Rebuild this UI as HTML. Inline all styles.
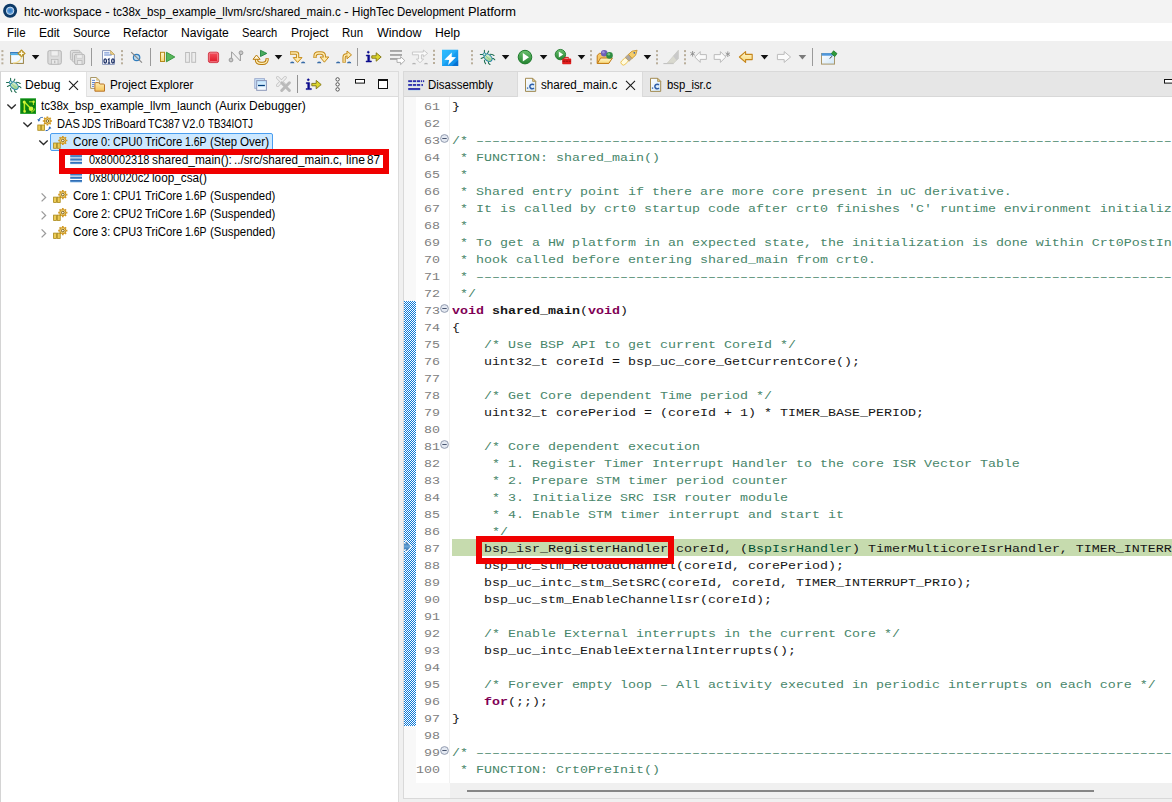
<!DOCTYPE html>
<html><head><meta charset="utf-8"><title>htc-workspace</title>
<style>
*{box-sizing:border-box;margin:0;padding:0}
html,body{width:1172px;height:802px;overflow:hidden;background:#f0f0f0;font-family:"Liberation Sans", sans-serif;}
.a{position:absolute}
.t{position:absolute;white-space:pre;line-height:14px;font-family:"Liberation Sans", sans-serif;transform-origin:0 0;display:inline-block}
#title{left:0;top:0;width:1172px;height:23px;background:#f3f3f3}
#menu{left:0;top:23px;width:1172px;height:18px;background:#fff}
#tool{left:0;top:41px;width:1172px;height:30px;background:#f0f0f0}
#lpanel{left:0;top:71px;width:399px;height:740px;background:#fff;border:1px solid #dcdcdc;border-left-color:#d4d4d4}
#ltabs{left:1px;top:72px;width:397px;height:25px;background:#f1f1f1;border-bottom:1px solid #dcdcdc}
#ltab1{left:1px;top:72px;width:86px;height:25px;background:#fff;border-right:1px solid #e2e2e2}
#rpanel{left:403px;top:71px;width:780px;height:728px;background:#fff;border:1px solid #d9d9d9}
#rtabs{left:404px;top:72px;width:768px;height:25px;background:#e6e6e6;border-bottom:1px solid #d8d8d8}
#rtab2{left:517px;top:72px;width:126px;height:25px;background:#f6f6f6;border-right:1px solid #dadada;border-left:1px solid #dadada}
#ruler{left:404px;top:97px;width:12px;height:701px;background:#f8f8f8}
#rulerb{left:404px;top:301px;width:12px;height:425px;background-color:#fff;
  background-image:linear-gradient(45deg,#0a78d8 25%,transparent 25%,transparent 75%,#0a78d8 75%),linear-gradient(45deg,#0a78d8 25%,transparent 25%,transparent 75%,#0a78d8 75%);
  background-size:2px 2px;background-position:1px 0,0 1px}
#lnbot{left:416px;top:783px;width:34px;height:15px;background:#f8f8f8}
#lnsep{left:449px;top:97px;width:1px;height:686px;background:#f1f1f1}
#hs{left:450px;top:783px;width:722px;height:15px;background:#f0f0f0}
#hst{left:467px;top:790px;width:627px;height:2px;background:#868686}
#nums{left:409px;top:98.5px;width:31px;height:806px;overflow:hidden;text-align:right;color:#808080;font:13.333px/20px "Liberation Mono", monospace;transform:scaleY(.85);transform-origin:0 0}
#code{left:452px;top:98.5px;width:720px;height:806px;overflow:hidden;white-space:pre;color:#161616;font:13.333px/20px "Liberation Mono", monospace;transform:scaleY(.85);transform-origin:0 0}
#cur{left:452px;top:539px;width:720px;height:17px;background:#c6dbae}
.c{color:#48866a} .k{color:#7f0055;font-weight:bold} .b{font-weight:bold} .ty{color:#005032}
.fold{position:absolute;left:439.8px}
#sel{left:50px;top:133px;width:223px;height:18px;background:#cce8ff;border:1px solid #4a9ef0;border-radius:2px}
.red{position:absolute;border:6px solid #f00000}
</style></head><body>
<div id=title class=a></div><div id=menu class=a></div><div id=tool class=a></div>
<div id=lpanel class=a></div><div id=ltabs class=a></div><div id=ltab1 class=a></div>
<div id=rpanel class=a></div><div id=rtabs class=a></div><div id=rtab2 class=a></div>
<div id=ruler class=a></div><div id=rulerb class=a></div><div id=lnbot class=a></div><div id=lnsep class=a></div>
<div id=cur class=a></div>
<div id=nums class=a><div>61</div><div>62</div><div>63</div><div>64</div><div>65</div><div>66</div><div>67</div><div>68</div><div>69</div><div>70</div><div>71</div><div>72</div><div>73</div><div>74</div><div>75</div><div>76</div><div>77</div><div>78</div><div>79</div><div>80</div><div>81</div><div>82</div><div>83</div><div>84</div><div>85</div><div>86</div><div>87</div><div>88</div><div>89</div><div>90</div><div>91</div><div>92</div><div>93</div><div>94</div><div>95</div><div>96</div><div>97</div><div>98</div><div>99</div><div>100</div></div>
<div id=code class=a><div>}</div><div>&nbsp;</div><div><span class=c>/* ––––––––––––––––––––––––––––––––––––––––––––––––––––––––––––––––––––––––––––––––––––––––––––––––––––––––––––––––––––––––</span></div><div><span class=c> * FUNCTION: shared_main()</span></div><div><span class=c> *</span></div><div><span class=c> * Shared entry point if there are more core present in uC derivative.</span></div><div><span class=c> * It is called by crt0 startup code after crt0 finishes &#x27;C&#x27; runtime environment initialization.</span></div><div><span class=c> *</span></div><div><span class=c> * To get a HW platform in an expected state, the initialization is done within Crt0PostInit</span></div><div><span class=c> * hook called before entering shared_main from crt0.</span></div><div><span class=c> * ––––––––––––––––––––––––––––––––––––––––––––––––––––––––––––––––––––––––––––––––––––––––––––––––––––––––––––––––––––––––</span></div><div><span class=c> */</span></div><div><span class=k>void</span> <span class=b>shared_main</span>(<span class=k>void</span>)</div><div>{</div><div><span class=c>    /* Use BSP API to get current CoreId */</span></div><div>    uint32_t coreId = bsp_uc_core_GetCurrentCore();</div><div>&nbsp;</div><div><span class=c>    /* Get Core dependent Time period */</span></div><div>    uint32_t corePeriod = (coreId + 1) * TIMER_BASE_PERIOD;</div><div>&nbsp;</div><div><span class=c>    /* Core dependent execution</span></div><div><span class=c>     * 1. Register Timer Interrupt Handler to the core ISR Vector Table</span></div><div><span class=c>     * 2. Prepare STM timer period counter</span></div><div><span class=c>     * 3. Initialize SRC ISR router module</span></div><div><span class=c>     * 4. Enable STM timer interrupt and start it</span></div><div><span class=c>     */</span></div><div class=cur>    bsp_isr_RegisterHandler(coreId, (<span class=ty>BspIsrHandler</span>) TimerMulticoreIsrHandler, TIMER_INTERRUPT_PRIO);</div><div>    bsp_uc_stm_ReloadChannel(coreId, corePeriod);</div><div>    bsp_uc_intc_stm_SetSRC(coreId, coreId, TIMER_INTERRUPT_PRIO);</div><div>    bsp_uc_stm_EnableChannelIsr(coreId);</div><div>&nbsp;</div><div><span class=c>    /* Enable External interrupts in the current Core */</span></div><div>    bsp_uc_intc_EnableExternalInterrupts();</div><div>&nbsp;</div><div><span class=c>    /* Forever empty loop – All activity executed in periodic interrupts on each core */</span></div><div>    <span class=k>for</span>(;;);</div><div>}</div><div>&nbsp;</div><div><span class=c>/* ––––––––––––––––––––––––––––––––––––––––––––––––––––––––––––––––––––––––––––––––––––––––––––––––––––––––––––––––––––––––</span></div><div><span class=c> * FUNCTION: Crt0PreInit()</span></div></div>
<div class=a style="left:0;top:98px;width:0;height:0"><svg class=fold style='top:36px' width=9 height=9 viewBox='0 0 9 9'><circle cx=4.5 cy=4.5 r=3.9 fill='#e4e9f2' stroke='#8a93a8' stroke-width=.9 /><path d='M2.3 4.5H6.7' stroke='#4a5670' stroke-width=1 /></svg><svg class=fold style='top:206px' width=9 height=9 viewBox='0 0 9 9'><circle cx=4.5 cy=4.5 r=3.9 fill='#e4e9f2' stroke='#8a93a8' stroke-width=.9 /><path d='M2.3 4.5H6.7' stroke='#4a5670' stroke-width=1 /></svg><svg class=fold style='top:342px' width=9 height=9 viewBox='0 0 9 9'><circle cx=4.5 cy=4.5 r=3.9 fill='#e4e9f2' stroke='#8a93a8' stroke-width=.9 /><path d='M2.3 4.5H6.7' stroke='#4a5670' stroke-width=1 /></svg><svg class=fold style='top:648px' width=9 height=9 viewBox='0 0 9 9'><circle cx=4.5 cy=4.5 r=3.9 fill='#e4e9f2' stroke='#8a93a8' stroke-width=.9 /><path d='M2.3 4.5H6.7' stroke='#4a5670' stroke-width=1 /></svg></div>
<div id=hs class=a></div><div id=hst class=a></div>
<div id=sel class=a></div>
<span class=t style='left:23.9px;top:4.5px;font-size:12px;color:#000;transform:scaleX(1.0029);'>htc-workspace</span>
<span class=t style='left:104.9px;top:4.5px;font-size:12px;color:#000;transform:scaleX(1.2000);'>-</span>
<span class=t style='left:112.7px;top:4.5px;font-size:12px;color:#000;transform:scaleX(0.9644);'>tc38x_bsp_example_llvm/src/shared_main.c</span>
<span class=t style='left:343.8px;top:4.5px;font-size:12px;color:#000;transform:scaleX(1.1750);'>-</span>
<span class=t style='left:351.5px;top:4.5px;font-size:12px;color:#000;transform:scaleX(0.9710);'>HighTec</span>
<span class=t style='left:397.0px;top:4.5px;font-size:12px;color:#000;transform:scaleX(0.9488);'>Development</span>
<span class=t style='left:468.0px;top:4.5px;font-size:12px;color:#000;transform:scaleX(1.0741);'>Platform</span>
<span class=t style='left:6.9px;top:25.5px;font-size:12px;color:#000;transform:scaleX(0.9616);'>File</span>
<span class=t style='left:38.8px;top:25.5px;font-size:12px;color:#000;transform:scaleX(1.0006);'>Edit</span>
<span class=t style='left:72.5px;top:25.5px;font-size:12px;color:#000;transform:scaleX(0.9729);'>Source</span>
<span class=t style='left:122.8px;top:25.5px;font-size:12px;color:#000;transform:scaleX(0.9855);'>Refactor</span>
<span class=t style='left:180.7px;top:25.5px;font-size:12px;color:#000;transform:scaleX(1.0090);'>Navigate</span>
<span class=t style='left:241.8px;top:25.5px;font-size:12px;color:#000;transform:scaleX(0.9282);'>Search</span>
<span class=t style='left:290.9px;top:25.5px;font-size:12px;color:#000;transform:scaleX(1.0064);'>Project</span>
<span class=t style='left:342.1px;top:25.5px;font-size:12px;color:#000;transform:scaleX(0.9539);'>Run</span>
<span class=t style='left:376.7px;top:25.5px;font-size:12px;color:#000;transform:scaleX(1.0425);'>Window</span>
<span class=t style='left:435.0px;top:25.5px;font-size:12px;color:#000;transform:scaleX(1.0167);'>Help</span>
<span class=t style='left:24.5px;top:78.0px;font-size:12px;color:#000;transform:scaleX(1.0064);'>Debug</span>
<span class=t style='left:109.5px;top:78.0px;font-size:12px;color:#000;transform:scaleX(0.9780);'>Project Explorer</span>
<span class=t style='left:427.8px;top:78.0px;font-size:12px;color:#000;transform:scaleX(0.9557);'>Disassembly</span>
<span class=t style='left:541.1px;top:78.0px;font-size:12px;color:#000;transform:scaleX(0.9705);'>shared_main.c</span>
<span class=t style='left:666.5px;top:78.0px;font-size:12px;color:#000;transform:scaleX(0.9396);'>bsp_isr.c</span>
<span class=t style='left:40.8px;top:99.0px;font-size:12px;color:#000;transform:scaleX(0.9622);'>tc38x_bsp_example_llvm_launch</span>
<span class=t style='left:214.7px;top:99.0px;font-size:12px;color:#000;transform:scaleX(0.9827);'>(Aurix</span>
<span class=t style='left:249.3px;top:99.0px;font-size:12px;color:#000;transform:scaleX(0.9999);'>Debugger)</span>
<span class=t style='left:56.7px;top:117.0px;font-size:12px;color:#000;transform:scaleX(0.9235);'>DAS</span>
<span class=t style='left:81.8px;top:117.0px;font-size:12px;color:#000;transform:scaleX(0.8336);'>JDS</span>
<span class=t style='left:102.7px;top:117.0px;font-size:12px;color:#000;transform:scaleX(0.9390);'>TriBoard</span>
<span class=t style='left:148.0px;top:117.0px;font-size:12px;color:#000;transform:scaleX(0.8853);'>TC387</span>
<span class=t style='left:182.1px;top:117.0px;font-size:12px;color:#000;transform:scaleX(0.9114);'>V2.0</span>
<span class=t style='left:208.1px;top:117.0px;font-size:12px;color:#000;transform:scaleX(0.8210);'>TB34IOTJ</span>
<span class=t style='left:73.0px;top:135.0px;font-size:12px;color:#000;transform:scaleX(0.9725);'>Core</span>
<span class=t style='left:100.9px;top:135.0px;font-size:12px;color:#000;transform:scaleX(0.9186);'>0:</span>
<span class=t style='left:112.8px;top:135.0px;font-size:12px;color:#000;transform:scaleX(0.9152);'>CPU0</span>
<span class=t style='left:144.5px;top:135.0px;font-size:12px;color:#000;transform:scaleX(0.9453);'>TriCore</span>
<span class=t style='left:185.1px;top:135.0px;font-size:12px;color:#000;transform:scaleX(0.8668);'>1.6P</span>
<span class=t style='left:209.9px;top:135.0px;font-size:12px;color:#000;transform:scaleX(0.9412);'>(Step</span>
<span class=t style='left:239.5px;top:135.0px;font-size:12px;color:#000;transform:scaleX(0.9700);'>Over)</span>
<span class=t style='left:89.1px;top:153.0px;font-size:12px;color:#000;transform:scaleX(0.9141);'>0x80002318</span>
<span class=t style='left:151.5px;top:153.0px;font-size:12px;color:#000;transform:scaleX(0.9900);'>shared_main():</span>
<span class=t style='left:233.5px;top:153.0px;font-size:12px;color:#000;transform:scaleX(0.9697);'>../src/shared_main.c,</span>
<span class=t style='left:346.1px;top:153.0px;font-size:12px;color:#000;transform:scaleX(1.0114);'>line</span>
<span class=t style='left:367.3px;top:153.0px;font-size:12px;color:#000;transform:scaleX(0.9806);'>87</span>
<span class=t style='left:88.7px;top:171.0px;font-size:12px;color:#000;transform:scaleX(0.9252);'>0x800020c2</span>
<span class=t style='left:151.6px;top:171.0px;font-size:12px;color:#000;transform:scaleX(0.9798);'>loop_csa()</span>
<span class=t style='left:73.0px;top:189.0px;font-size:12px;color:#000;transform:scaleX(0.9725);'>Core</span>
<span class=t style='left:100.9px;top:189.0px;font-size:12px;color:#000;transform:scaleX(0.9186);'>1:</span>
<span class=t style='left:112.8px;top:189.0px;font-size:12px;color:#000;transform:scaleX(0.8902);'>CPU1</span>
<span class=t style='left:144.5px;top:189.0px;font-size:12px;color:#000;transform:scaleX(0.9453);'>TriCore</span>
<span class=t style='left:185.1px;top:189.0px;font-size:12px;color:#000;transform:scaleX(0.8668);'>1.6P</span>
<span class=t style='left:210.2px;top:189.0px;font-size:12px;color:#000;transform:scaleX(0.9503);'>(Suspended)</span>
<span class=t style='left:73.0px;top:207.0px;font-size:12px;color:#000;transform:scaleX(0.9725);'>Core</span>
<span class=t style='left:100.9px;top:207.0px;font-size:12px;color:#000;transform:scaleX(0.9186);'>2:</span>
<span class=t style='left:112.8px;top:207.0px;font-size:12px;color:#000;transform:scaleX(0.9152);'>CPU2</span>
<span class=t style='left:144.5px;top:207.0px;font-size:12px;color:#000;transform:scaleX(0.9453);'>TriCore</span>
<span class=t style='left:185.1px;top:207.0px;font-size:12px;color:#000;transform:scaleX(0.8668);'>1.6P</span>
<span class=t style='left:210.2px;top:207.0px;font-size:12px;color:#000;transform:scaleX(0.9503);'>(Suspended)</span>
<span class=t style='left:73.0px;top:225.0px;font-size:12px;color:#000;transform:scaleX(0.9725);'>Core</span>
<span class=t style='left:100.9px;top:225.0px;font-size:12px;color:#000;transform:scaleX(0.9186);'>3:</span>
<span class=t style='left:112.8px;top:225.0px;font-size:12px;color:#000;transform:scaleX(0.9152);'>CPU3</span>
<span class=t style='left:144.5px;top:225.0px;font-size:12px;color:#000;transform:scaleX(0.9453);'>TriCore</span>
<span class=t style='left:185.1px;top:225.0px;font-size:12px;color:#000;transform:scaleX(0.8668);'>1.6P</span>
<span class=t style='left:210.2px;top:225.0px;font-size:12px;color:#000;transform:scaleX(0.9503);'>(Suspended)</span>
<svg class=a style="left:0;top:0" width="1172" height="802" viewBox="0 0 1172 802">
<defs>
<linearGradient id="gY" x1="0" y1="0" x2="0" y2="1"><stop offset="0" stop-color="#fff6d0"/><stop offset="1" stop-color="#f7d774"/></linearGradient>
<linearGradient id="gG" x1="0" y1="0" x2="0" y2="1"><stop offset="0" stop-color="#6cc070"/><stop offset="1" stop-color="#23832f"/></linearGradient>
<linearGradient id="gR" x1="0" y1="0" x2="0" y2="1"><stop offset="0" stop-color="#f4525e"/><stop offset="1" stop-color="#df1626"/></linearGradient>
<linearGradient id="gB" x1="0" y1="0" x2="1" y2="1"><stop offset="0" stop-color="#27baff"/><stop offset="1" stop-color="#0a84e4"/></linearGradient>
<linearGradient id="gW" x1="0" y1="0" x2="1" y2="1"><stop offset="0" stop-color="#ffffff"/><stop offset="1" stop-color="#cfe6f8"/></linearGradient>
<linearGradient id="gBar" x1="0" y1="0" x2="0" y2="1"><stop offset="0" stop-color="#245fa8"/><stop offset="1" stop-color="#62a0dc"/></linearGradient>
<linearGradient id="gDis" x1="0" y1="0" x2="0" y2="1"><stop offset="0" stop-color="#1c1c9c"/><stop offset=".6" stop-color="#3030b0"/><stop offset="1" stop-color="#8cc0f0"/></linearGradient>
<linearGradient id="gBug" x1="0" y1="0" x2="1" y2="1"><stop offset="0" stop-color="#f0fae8"/><stop offset="1" stop-color="#84c476"/></linearGradient>
<linearGradient id="gF" x1="0" y1="0" x2="0" y2="1"><stop offset="0" stop-color="#feedb0"/><stop offset="1" stop-color="#f6c45a"/></linearGradient>
<g id="dd"><path d="M0 0H7.6L3.8 4.4Z" fill="#111"/></g>
<g id="ddg"><path d="M0 0H7.6L3.8 4.4Z" fill="#7a7a7a"/></g>
<g id="hd" fill="#b9ae9b"><rect x="0" y="0" width="2" height="2"/><rect x="0" y="4.1" width="2" height="2"/><rect x="0" y="8.2" width="2" height="2"/><rect x="0" y="12.2" width="2" height="2"/></g>
<g id="sep"><rect x="0" y="0" width="1" height="18" fill="#9a9a9a"/></g>
<g id="bug">
 <g stroke="#1f6e50" stroke-width="1.05" fill="none" stroke-linecap="round" stroke-linejoin="round">
  <path d="M4.4 0.3V2.9M8.7 1.1L7.5 3.6M0.3 4.5H3M1.2 8.5L3.8 7.3M10 4.3L12 4.4L14 5.5M12.2 8.4L13.6 8.6L14.8 9.8M4.4 10.2L4.6 12L5.6 13.7M8.4 12.2L8.6 13.4L10 14.5"/>
 </g>
 <ellipse cx="8.1" cy="7.8" rx="4.5" ry="3.1" transform="rotate(40 8.1 7.8)" fill="url(#gBug)" stroke="#1f80a8" stroke-width="1"/>
 <path d="M6 6.2L10.4 9.8" stroke="#8cc880" stroke-width=".9"/>
 <circle cx="4.5" cy="4.4" r="1.5" fill="#9ad0a8" stroke="#1f80a8" stroke-width=".9"/>
 <circle cx="4.3" cy="4.2" r=".6" fill="#f0fff0"/>
</g>
<g id="cfile">
 <path d="M.5 .5H7.6L10.7 3.6V13.6H.5Z" fill="url(#gW)" stroke="#a38b52" stroke-width="1"/>
 <path d="M7.6 .5V3.6H10.7Z" fill="#e9cf8d" stroke="#a38b52" stroke-width=".8"/>
 <rect x="1.9" y="9.6" width="1.3" height="1.4" fill="#3b68ad"/>
 <path d="M8.9 7.2A2.3 2.3 0 1 0 8.9 10.2" fill="none" stroke="#2f5fa8" stroke-width="1.5"/>
</g>
<g id="gear">
 <circle cx="0" cy="0" r="3.1" fill="#f8dc80" stroke="#c98f1b" stroke-width="1"/>
 <g stroke="#d29a22" stroke-width="1.7" stroke-linecap="butt"><path d="M0 -4.6V-3M0 4.6V3M-4.6 0H-3M4.6 0H3M-3.25 -3.25L-2.1 -2.1M3.25 3.25L2.1 2.1M-3.25 3.25L-2.1 2.1M3.25 -3.25L2.1 -2.1"/></g>
 <circle cx="0" cy="0" r="1.35" fill="#fbf3dc" stroke="#6e5210" stroke-width=".9"/>
</g>
<g id="bars2">
 <rect x=".4" y=".4" width="2.9" height="5.3" fill="#eccb55" stroke="#a98716" stroke-width=".8"/>
 <rect x="4.1" y=".4" width="2.9" height="5.3" fill="#eccb55" stroke="#a98716" stroke-width=".8"/>
</g>
<g id="core"><use href="#gear" x="9.6" y="3.9"/><use href="#bars2" x="0" y="6"/></g>
<g id="frame"><rect x="0" y="0" width="11.8" height="2.3" fill="url(#gBar)"/><rect x="0" y="3.3" width="11.8" height="2.3" fill="url(#gBar)"/><rect x="0" y="6.6" width="11.8" height="2.3" fill="url(#gBar)"/></g>
<g id="chevD"><path d="M0 0L4.2 4.1L8.4 0" fill="none" stroke="#2b2b2b" stroke-width="1.35"/></g>
<g id="chevR"><path d="M0 0L4 4L0 8" fill="none" stroke="#9a9a9a" stroke-width="1.3"/></g>
<g id="xx"><path d="M0 0L9 9M9 0L0 9" stroke="#1a1a1a" stroke-width="1.1" fill="none"/></g>
<g id="istep">
 <path d="M1.3 1.2A1 1 0 1 1 3.3 1.2A1 1 0 1 1 1.3 1.2ZM0.3 4H3.6V9.9H5.4V11H0.1V9.9H1.7V5.1H0.3Z" fill="#0a0a8c" stroke="#0a0a8c" stroke-width=".5"/>
 <path d="M5.8 4.8H10.2V1.8L15.2 6L10.2 10.2V7.2H5.8Z" fill="#dcd62c" stroke="#7e7210" stroke-width=".9" stroke-linejoin="round"/>
</g>
</defs>

<!-- title icon -->
<circle cx="10.1" cy="10.8" r="7" fill="#0d3a68"/><circle cx="10.1" cy="10.8" r="3.7" fill="#5b9bd8"/><circle cx="10.1" cy="10.8" r="3.7" fill="none" stroke="#dce9f6" stroke-width=".9"/><circle cx="10.1" cy="10.8" r="1.8" fill="#3b7fc4"/>

<!-- ============ toolbar ============ -->
<use href="#hd" x="1.4" y="50.1"/>
<!-- new -->
<rect x="10.6" y="52.6" width="12.8" height="10.8" fill="#f1f9ff" stroke="#9a8142"/>
<rect x="10.2" y="52.1" width="13.6" height="1.5" fill="#2b7bcb"/><rect x="10.2" y="53.6" width="13.6" height="1.5" fill="#4bb0e8"/>
<path d="M13 63.2C18 63 21 60 22 56" stroke="#f3dc92" stroke-width="1.2" fill="none"/>
<path d="M21.5 49.7L25.2 53.4L21.5 57.1L17.8 53.4Z" fill="#b98f1c" stroke="#b98f1c" stroke-width=".8" stroke-linejoin="round"/><path d="M21.5 51.2V55.6M19.3 53.4H23.7" stroke="#fffbe6" stroke-width="1.3"/>
<use href="#dd" x="31.8" y="55"/>
<!-- save (disabled) -->
<g id="sv"><rect x="47.9" y="50.6" width="13.4" height="13.6" rx="1.6" fill="#dcdcdc" stroke="#b4b4b4"/><rect x="51" y="50.8" width="7.2" height="5.2" fill="#efefef" stroke="#c2c2c2" stroke-width=".7"/><rect x="51.4" y="59.4" width="6.6" height="4.8" fill="#e8e8e8" stroke="#b9b9b9" stroke-width=".8"/><rect x="54" y="60.6" width="1.4" height="2.6" fill="#bdbdbd"/></g>
<!-- save all -->
<rect x="70.4" y="50.4" width="9.6" height="9.6" rx="1.4" fill="#e0e0e0" stroke="#bcbcbc"/>
<rect x="72.4" y="52.4" width="9.6" height="9.6" rx="1.4" fill="#e0e0e0" stroke="#bcbcbc"/>
<rect x="74.6" y="54.4" width="10" height="10" rx="1.4" fill="#dcdcdc" stroke="#b4b4b4"/>
<rect x="76.8" y="54.8" width="5.4" height="3.4" fill="#eeeeee" stroke="#c4c4c4" stroke-width=".6"/>
<rect x="77.4" y="60.6" width="4.6" height="3.8" fill="#e8e8e8" stroke="#b9b9b9" stroke-width=".8"/>
<use href="#sep" x="91" y="48"/>
<!-- 010 -->
<path d="M102.5 50.6H110.6L114.4 54.4V64.4H102.5Z" fill="#fbfcff" stroke="#8a98ba"/>
<path d="M110.6 50.6V54.4H114.4Z" fill="#ecd08a" stroke="#c8a860" stroke-width=".8"/>
<path d="M104.2 52.9H109.4M104.2 55H111.6" stroke="#5c82cc" stroke-width="1"/>
<g fill="none" stroke="#14285f" stroke-width="1.25"><ellipse cx="105.2" cy="60.9" rx="1.25" ry="2.1"/><path d="M107.9 59.6L109 58.8V63.2M107.8 63.1H110.2" stroke-width="1.1"/><ellipse cx="112.9" cy="60.9" rx="1.25" ry="2.1"/></g>
<use href="#hd" x="121" y="50.1"/>
<!-- skip breakpoints -->
<circle cx="136.6" cy="57.5" r="3.2" fill="#bcdaef" stroke="#2f7cbc" stroke-width="1.2"/>
<path d="M131.2 52.2L142 62.6" stroke="#868686" stroke-width="1.1"/>
<use href="#sep" x="150" y="48"/>
<!-- resume -->
<rect x="160.5" y="52.3" width="4" height="9.2" fill="url(#gY)" stroke="#b48a1c"/>
<path d="M166.4 52.2L174.8 57L166.4 61.8Z" fill="#58b85c" stroke="#2f8f36" stroke-width=".9" stroke-linejoin="round"/>
<!-- suspend disabled -->
<rect x="185.6" y="52.5" width="3.8" height="9.8" fill="#ececec" stroke="#bdbdbd"/>
<rect x="191.8" y="52.5" width="3.8" height="9.8" fill="#ececec" stroke="#bdbdbd"/>
<!-- stop -->
<rect x="208.4" y="52.2" width="10.2" height="10.4" rx="1.8" fill="url(#gR)" stroke="#d2404e" stroke-width="1"/>
<rect x="209.4" y="53.2" width="8.2" height="8.4" rx="1" fill="none" stroke="#f69aa2" stroke-width=".7"/>
<!-- disconnect -->
<g stroke="#9a9a9a" fill="none" stroke-width="1"><circle cx="231" cy="60" r="1.9" fill="#c8c8c8"/><circle cx="241" cy="52.8" r="1.9" fill="#c8c8c8"/><path d="M231.6 58V51.8L240.4 61V54.8"/></g>
<!-- restart -->
<path d="M260.5 50.3L266.8 53.4L260.5 56.5Z" fill="#4aac5e" stroke="#1f8440" stroke-width=".9" stroke-linejoin="round"/>
<path d="M256.5 58.6V60C256.5 63.4 259 63.4 261 63.4H262.6C265.6 63.4 267.2 62 267.2 58.2" fill="none" stroke="#b97c0e" stroke-width="3.3"/>
<path d="M256.5 58.6V60C256.5 63.4 259 63.4 261 63.4H262.6C265.6 63.4 267.2 62 267.2 58.9" fill="none" stroke="#ffefb6" stroke-width="1.3"/>
<path d="M256.5 55L260.1 59.3H253Z" fill="#fff7da" stroke="#b97c0e" stroke-width="1" stroke-linejoin="round"/>
<use href="#dd" x="274.7" y="55"/>
<!-- step into -->
<g fill="none" stroke-linejoin="round">
<path d="M290 53H296C297.2 53 297.6 53.6 297.6 54.6V58.4" stroke="#c48a18" stroke-width="3.3"/>
<path d="M293.2 57.6H302L297.6 62.4Z" fill="#ffe9a6" stroke="#c48a18" stroke-width="1"/>
<path d="M290.6 53H296C297.2 53 297.6 53.6 297.6 54.6V59.4" stroke="#ffecb0" stroke-width="1.3"/>
</g>
<path d="M290.1 63.3A2.15 1.7 0 0 1 294.4 63.3ZM301 63.3A2.15 1.7 0 0 1 305.3 63.3Z" fill="#356aa6"/>
<!-- step over -->
<g fill="none" stroke-linejoin="round">
<path d="M315 58V56.4C315 54.2 316.4 53 318.6 53H320.8C323 53 324.4 54.2 324.4 56.4V57.6" stroke="#c48a18" stroke-width="3.3"/>
<path d="M320 57H328.8L324.4 62.2Z" fill="#ffe9a6" stroke="#c48a18" stroke-width="1"/>
<path d="M315 57.4V56.4C315 54.2 316.4 53 318.6 53H320.8C323 53 324.4 54.2 324.4 56.4V58.8" stroke="#ffecb0" stroke-width="1.3"/>
</g>
<path d="M317 63.3A2.15 1.7 0 0 1 321.3 63.3Z" fill="#356aa6"/>
<!-- step return -->
<g fill="none" stroke-linejoin="round">
<path d="M344.1 62.8V57.4C344.1 55.8 345 54.9 346.6 54.9H347.6" stroke="#c48a18" stroke-width="3.3"/>
<path d="M347 51V58.8L351.5 54.9Z" fill="#ffe9a6" stroke="#c48a18" stroke-width="1"/>
<path d="M344.1 62.2V57.4C344.1 55.8 345 54.9 346.6 54.9H348.6" stroke="#ffecb0" stroke-width="1.3"/>
</g>
<path d="M336 63.3A2.15 1.7 0 0 1 340.3 63.3ZM347 63.3A2.15 1.7 0 0 1 351.3 63.3Z" fill="#356aa6"/>
<use href="#sep" x="357" y="48"/>
<use href="#istep" x="366" y="51"/>
<!-- gray lines -->
<g fill="#a6a6a6"><rect x="390" y="50" width="12" height="1.9"/><rect x="390" y="54" width="12" height="1.9"/><rect x="390" y="58" width="8" height="1.9"/></g>
<path d="M397 58.6H400.6V56.6L404.8 60.6L400.6 64.6V62.4H397Z" fill="#fff" stroke="#a6a6a6" stroke-width=".9" stroke-linejoin="round"/>
<!-- gray step filter -->
<g fill="#fafafa" stroke="#c4c4c4" stroke-width=".9" stroke-linejoin="round"><path d="M412.4 52H423.4V50L427.6 53.4L423.4 56.8V54.8H421.4V59H423.6L420 62.8L416.4 59H418.6V54.8H412.4Z"/></g>
<path d="M412 64.2A2 1.5 0 0 1 416 64.2ZM424 64.2A2 1.5 0 0 1 428 64.2Z" fill="#b4b4b4"/>
<use href="#hd" x="433" y="49.8"/>
<!-- flash -->
<rect x="442" y="49.8" width="16.2" height="16.2" fill="url(#gB)"/>
<path d="M442 49.8H458.2L442 66Z" fill="#3cc4ff" opacity=".35"/>
<path d="M451.8 52.6L444.4 59.8L449.2 60L448.1 64.9L456 57.2L451.7 57Z" fill="#fff"/><path d="M458.2 60V66H452Z" fill="#0566c8" opacity=".7"/>
<use href="#hd" x="471" y="50.1"/>
<use href="#bug" x="480" y="50"/>
<use href="#dd" x="501.8" y="55"/>
<!-- run -->
<circle cx="525" cy="57.1" r="6.8" fill="url(#gG)" stroke="#1f7a2d" stroke-width="1"/>
<path d="M522.8 53L529 57.2L522.8 61.4Z" fill="#fff"/>
<use href="#dd" x="539.8" y="55"/>
<!-- run ext -->
<circle cx="560.4" cy="54.6" r="5.2" fill="url(#gG)" stroke="#1f7a2d" stroke-width=".9"/>
<path d="M558.8 51.6L563.2 54.6L558.8 57.6Z" fill="#fff"/>
<path d="M564.8 58.6V57.4H568.4V58.6" fill="none" stroke="#d41414" stroke-width="1"/>
<rect x="562.2" y="58.6" width="9" height="5.6" rx=".8" fill="#e01c1c"/>
<path d="M562.6 61.2H570.8" stroke="#8e0c0c" stroke-width=".9" stroke-dasharray="2.4 .6"/>
<use href="#dd" x="577.7" y="55"/>
<use href="#hd" x="590" y="50.1"/>
<!-- open type -->
<path d="M597.2 63.4V55.4L599.4 53.4H603L604 55H611.6L608.6 63.4Z" fill="#f6c868" stroke="#c27a16" stroke-width="1" stroke-linejoin="round"/>
<path d="M597.4 63.4L600.6 58H612.4L608.8 63.4Z" fill="url(#gY)" stroke="#c27a16" stroke-width="1" stroke-linejoin="round"/>
<circle cx="604.2" cy="53.3" r="3.3" fill="#6f5fb8"/><circle cx="603.4" cy="52.2" r="1.3" fill="#a89ce0" opacity=".8"/>
<circle cx="609.5" cy="55.4" r="3.3" fill="#2f8c42"/><circle cx="608.8" cy="54.2" r="1.3" fill="#86d098" opacity=".8"/>
<!-- pen -->
<g transform="rotate(-42 629 57.4)">
 <rect x="619" y="55.1" width="8.2" height="4.8" rx="2.2" fill="#fffbe0" stroke="#ecc04a" stroke-width=".9"/>
 <rect x="626.4" y="54.8" width="4.2" height="5.4" fill="#aaa6a4" stroke="#b89858" stroke-width=".7"/>
 <path d="M630.6 54.8H635.4L639.8 57.5L635.4 60.2H630.6Z" fill="#f5cd6a" stroke="#c8922a" stroke-width=".8"/>
 <circle cx="636" cy="57.5" r=".85" fill="#2f5fb0"/>
</g>
<use href="#dd" x="643.6" y="55"/>
<use href="#hd" x="656" y="50.1"/>
<!-- gray edit -->
<path d="M663.4 63.6H673.6" stroke="#bdbdbd" stroke-width="1"/>
<path d="M667.2 63.2L678.4 50.2V58.6L673.6 63.2Z" fill="#d9d9cf" stroke="#c6c6c0" stroke-width=".6"/>
<path d="M673.2 56L678.4 50.2V58.6L676.6 60.4Z" fill="#c9c9c9"/>
<use href="#hd" x="684" y="50.1"/>
<!-- back* -->
<path d="M706.4 54.6H700.2V51.6L694.8 57L700.2 62.4V59.4H706.4Z" fill="#fafafa" stroke="#b6b6b6" stroke-width=".9" stroke-linejoin="round"/>
<path d="M692.6 51V56.6M690.4 52.4L694.8 55.2M694.8 52.4L690.4 55.2" stroke="#8e8e8e" stroke-width=".9"/>
<path d="M714.2 54.6H720.4V51.6L725.8 57L720.4 62.4V59.4H714.2Z" fill="#fafafa" stroke="#b6b6b6" stroke-width=".9" stroke-linejoin="round"/>
<path d="M727.8 51.4V57M725.6 52.8L730 55.6M730 52.8L725.6 55.6" stroke="#8e8e8e" stroke-width=".9"/>
<!-- back yellow -->
<path d="M752.2 54.4H745.6V51.6L739.4 57L745.6 62.4V59.6H752.2Z" fill="url(#gY)" stroke="#c5851a" stroke-width="1.1" stroke-linejoin="round"/>
<use href="#dd" x="760.7" y="55"/>
<path d="M777.4 54.4H784.2V51.6L790.6 57L784.2 62.4V59.6H777.4Z" fill="#fbfbfb" stroke="#bcbcbc" stroke-width="1" stroke-linejoin="round"/>
<use href="#ddg" x="798.6" y="55"/>
<use href="#sep" x="812" y="48"/>
<!-- pin -->
<rect x="821.5" y="53.5" width="13" height="10.6" fill="url(#gW)" stroke="#a9966a"/>
<rect x="821.5" y="53.1" width="13" height="2.6" fill="#4f97dc"/>
<path d="M829.8 58.6L832 56.2" stroke="#333" stroke-width="1"/>
<path d="M831.4 53.6L833.6 50.8L837 53.6L834.8 56.6Z" fill="#2f9a3a" stroke="#1f7a2a" stroke-width=".8"/>

<!-- ============ left view tabs ============ -->
<use href="#bug" x="6.2" y="78" transform="translate(0 0)"/>
<use href="#xx" x="69" y="80.9"/>
<!-- project explorer -->
<path d="M90.6 77.5H96.6L99.4 80.3V88.4H90.6Z" fill="#fafafa" stroke="#a89868" stroke-width="1"/>
<path d="M92 80.4H95M92 82.5H95M92 84.4H94.4M92 86.4H94.2" stroke="#5f86d0" stroke-width="1"/>
<path d="M96.6 77.5V80.3H99.4Z" fill="#e4cf98" stroke="#c8b070" stroke-width=".6"/>
<path d="M94.9 91.2V83.6C94.9 82.8 95.3 82.6 95.9 82.6H98.6L99.8 84H103.4C104.2 84 104.5 84.4 104.5 85V91.2Z" fill="url(#gF)" stroke="#b8742a" stroke-width="1" stroke-linejoin="round"/>
<!-- collapse all -->
<defs><linearGradient id="gCA" x1="0" y1="0" x2="0" y2="1"><stop offset="0" stop-color="#bfe5ff"/><stop offset="1" stop-color="#ffffff"/></linearGradient></defs>
<rect x="254.8" y="78.7" width="9.6" height="9.6" fill="#d2ebff" stroke="#9aa8cc" stroke-width="1"/>
<rect x="256.7" y="80.6" width="9.7" height="9.7" fill="url(#gCA)" stroke="#8a96b8" stroke-width="1"/>
<path d="M258 85.5H264.9" stroke="#003c7a" stroke-width="1.3"/>
<!-- remove all terminated -->
<g stroke="#c4c4c4" stroke-width="3.2" stroke-linecap="round"><path d="M277.6 77.6L285.2 85.4M285.2 77.6L277.6 85.4"/></g>
<g stroke="#efefef" stroke-width="1.6" stroke-linecap="round"><path d="M277.6 77.6L285.2 85.4M285.2 77.6L277.6 85.4"/></g>
<g stroke="#bababa" stroke-width="3" stroke-linecap="round"><path d="M281.7 82.8L289.4 90.5M289.4 82.8L281.7 90.5"/></g>
<rect x="297" y="75" width="1" height="18" fill="#929292"/>
<use href="#istep" x="306" y="78.6"/>
<g fill="#fff" stroke="#444" stroke-width=".9"><circle cx="337.6" cy="79.4" r="1.7"/><circle cx="337.6" cy="84.4" r="1.7"/><circle cx="337.6" cy="89.4" r="1.7"/></g>
<rect x="355.5" y="79.5" width="9" height="3.6" fill="#fff" stroke="#111" stroke-width="1"/>
<rect x="378.5" y="79.5" width="9" height="9" fill="#fff" stroke="#111" stroke-width="1"/><rect x="378" y="79" width="10" height="2" fill="#111"/>

<!-- ============ editor tabs ============ -->
<g fill="url(#gDis)">
 <rect x="408.2" y="80.3" width="4" height="2.1"/><rect x="413" y="80.3" width="3.2" height="2.1"/><rect x="417" y="80.3" width="3.2" height="2.1"/><rect x="421" y="80.3" width="1.2" height="2.1"/><rect x="423" y="80.3" width="1.2" height="2.1"/>
 <rect x="408.2" y="84.1" width="4" height="2.1"/><rect x="413" y="84.1" width="3.2" height="2.1"/><rect x="417" y="84.1" width="3.2" height="2.1"/><rect x="421.4" y="84.1" width="1.6" height="2.1"/>
 <rect x="408.2" y="88.1" width="12" height="2.2"/>
</g>
<use href="#cfile" x="525" y="77.8"/>
<use href="#xx" x="626" y="80.9"/>
<use href="#cfile" x="650" y="77.8"/>
<rect x="1164.5" y="79.5" width="9" height="3.6" fill="#fff" stroke="#111" stroke-width="1"/>

<!-- ============ tree ============ -->
<use href="#chevD" x="7.4" y="104.4"/>
<rect x="20.2" y="98.3" width="15.8" height="15.6" fill="#16981c"/>
<rect x="21.2" y="99.3" width="13.8" height="13.6" fill="#0b7f10"/>
<g stroke="#b8ec24" stroke-width="1.5" fill="none"><path d="M23.8 101.2L31.2 109M24.4 102V111" /><path d="M29 101.8H33.4V105" stroke-width="1"/><path d="M31 112C33.4 112 34.4 110.6 34.4 108.6" stroke-width="1"/></g>
<g fill="#d4f43c"><circle cx="31" cy="108.8" r="2.3"/><circle cx="24.2" cy="102" r="1.5"/><circle cx="33.6" cy="101.8" r="1.2"/><circle cx="24.6" cy="111.4" r="1.3"/></g>
<use href="#chevD" x="23.4" y="122.5"/>
<!-- target icon -->
<use href="#gear" x="47.4" y="121"/>
<use href="#bars2" x="37.4" y="124.6"/>
<g fill="none" stroke="#2a66b8" stroke-width="1"><path d="M42.8 117.4C40.6 117.2 39 118.4 38.6 120.4"/><path d="M45.6 130.6C47.8 130.8 49.4 129.6 50 127.6"/></g>
<path d="M37.2 119.2L38.8 121.8L40.6 119.6Z" fill="#2a66b8"/><path d="M51.4 128.6L49.8 126.2L48.2 128.4Z" fill="#2a66b8"/>
<use href="#chevD" x="39.3" y="140.4"/>
<use href="#core" x="53.2" y="136.6"/>
<use href="#frame" x="70.2" y="155.2"/>
<use href="#frame" x="70.2" y="173.4"/>
<use href="#chevR" x="41.6" y="193.4"/><use href="#core" x="53.2" y="190.7"/>
<use href="#chevR" x="41.6" y="211.4"/><use href="#core" x="53.2" y="208.7"/>
<use href="#chevR" x="41.6" y="229.4"/><use href="#core" x="53.2" y="226.7"/>

<!-- ruler arrow -->
<defs><linearGradient id="gArr" x1="0" y1="0" x2="0" y2="1"><stop offset="0" stop-color="#1c5c9e"/><stop offset=".5" stop-color="#6aa6d8"/><stop offset="1" stop-color="#1c5c9e"/></linearGradient><clipPath id="cpR"><rect x="404" y="536" width="12" height="22"/></clipPath></defs>
<g clip-path="url(#cpR)"><path d="M402 543.6H406.2V541.2L411 546.4L406.2 551.6V549.2H402Z" fill="url(#gArr)" stroke="#fff" stroke-width="1.3" stroke-linejoin="miter" paint-order="stroke"/></g>
</svg>

<div class=red style="left:59px;top:149px;width:330px;height:25px"></div>
<div class=red style="left:476px;top:536px;width:198px;height:28px"></div>
</body></html>
